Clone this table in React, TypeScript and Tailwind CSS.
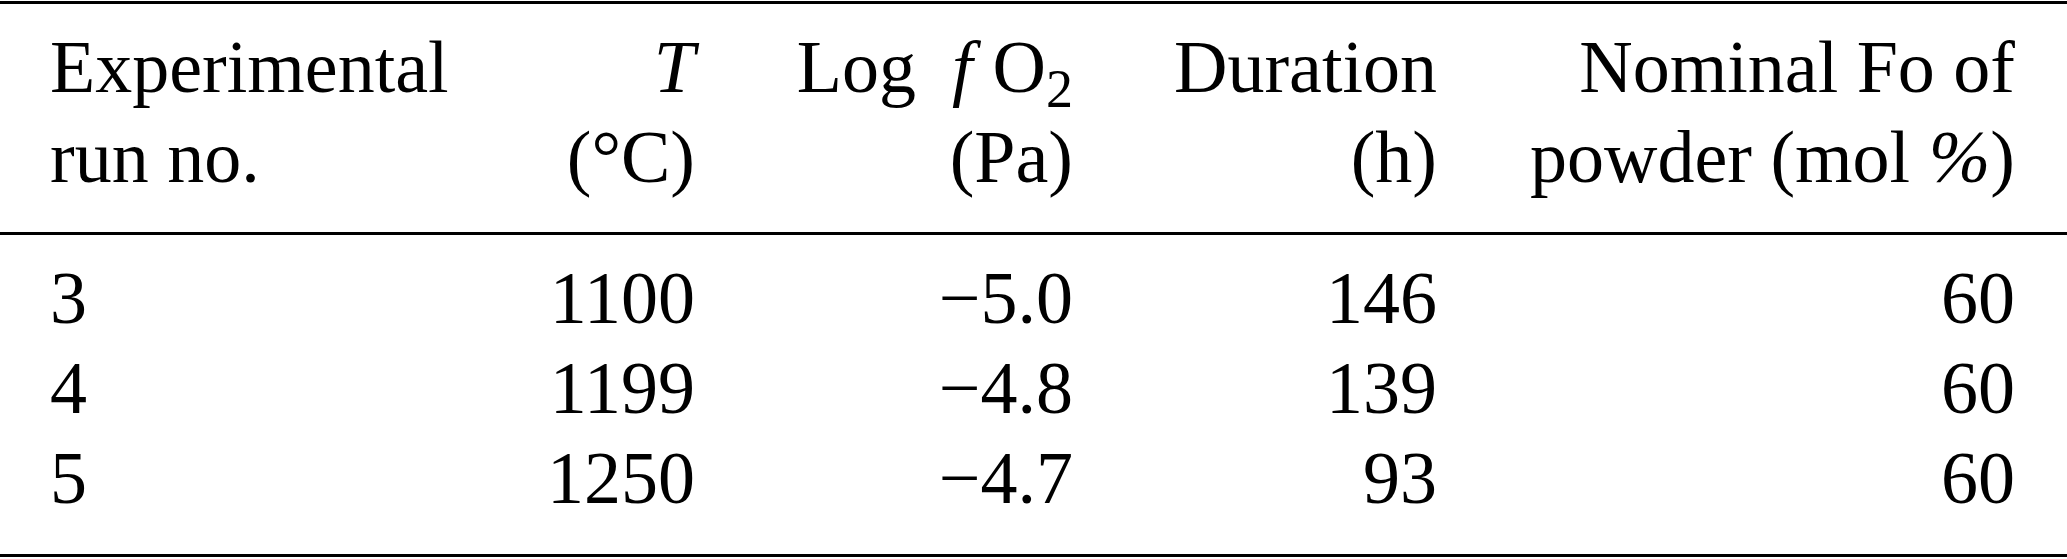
import React from "react";

const rows = [
  ["3", "1100", "\u22125.0", "146", "60"],
  ["4", "1199", "\u22124.8", "139", "60"],
  ["5", "1250", "\u22124.7", "93", "60"],
];

const cols = "grid grid-cols-[410px_235px_378px_364px_578px] px-[50px]";

export default function App() {
  return (
    <div className="w-[2067px] h-[559px] bg-white text-black font-['Liberation_Serif','Times_New_Roman',serif] text-[74px] leading-[90px] overflow-hidden">
      <div className="mt-[1px] h-[3px] bg-black" />
      <div className={`${cols} pt-[18px] pb-[30px]`}>
        <div className="text-left">
          <div>Experimental</div>
          <div>run no.</div>
        </div>
        <div className="text-right">
          <div className="italic">T</div>
          <div>(°C)</div>
        </div>
        <div className="text-right">
          <div className="h-[90px]">
            Log<span className="ml-[36px] italic">f</span>
            <span className="ml-[20px]">O</span>
            <span className="relative top-[15px] text-[54px] leading-none">2</span>
          </div>
          <div>(Pa)</div>
        </div>
        <div className="text-right">
          <div>Duration</div>
          <div>(h)</div>
        </div>
        <div className="text-right">
          <div>Nominal Fo of</div>
          <div>
            powder (mol <span className="italic">%</span>)
          </div>
        </div>
      </div>
      <div className="h-[3px] bg-black" />
      <div className={`${cols} pt-[18px] pb-[31px]`}>
        {rows.map((r, i) => (
          <React.Fragment key={i}>
            <div className="text-left">{r[0]}</div>
            <div className="text-right">{r[1]}</div>
            <div className="text-right">{r[2]}</div>
            <div className="text-right">{r[3]}</div>
            <div className="text-right">{r[4]}</div>
          </React.Fragment>
        ))}
      </div>
      <div className="h-[3px] bg-black" />
    </div>
  );
}
